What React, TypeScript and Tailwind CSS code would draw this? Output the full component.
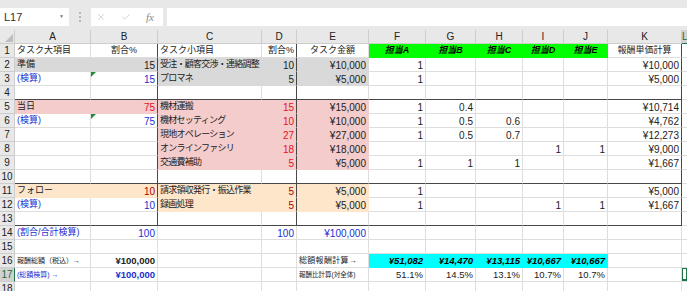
import { X, Check } from "lucide-react"

type Cell = { t?: string; a?: "l" | "c" | "r"; fg?: string; sz?: string; k?: string; bg?: string; tri?: boolean }

const COLS = ["A", "B", "C", "D", "E", "F", "G", "H", "I", "J", "K", "L"]

const GRAY = "bg-[#d9d9d9]"
const PINK = "bg-[#f4cccc]"
const PEACH = "bg-[#fde6c9]"
const GREEN = "bg-[#00ff00]"
const CYAN = "bg-[#00ffff]"

const BLUE = "text-[#1b2fd0]"
const RED = "text-[#e8101e]"
const DRED = "text-[#b00000]"
const COND = "tracking-[-0.75px]"

const head = (t: string): Cell => ({ t, a: "c", bg: GREEN, fg: "text-black", sz: "text-[9px]", k: "font-bold italic" })
const total = (t: string): Cell => ({ t, bg: CYAN, fg: "text-black", sz: "text-[9.5px]", k: "font-bold italic" })
const pct = (t: string): Cell => ({ t, sz: "text-[9.5px]" })

const data: Record<number, Record<string, Cell>> = {
  1: {
    A: { t: "タスク大項目" },
    B: { t: "割合%", a: "c" },
    C: { t: "タスク小項目" },
    D: { t: "割合%", a: "r" },
    E: { t: "タスク金額", a: "c" },
    F: head("担当A"),
    G: head("担当B"),
    H: head("担当C"),
    I: head("担当D"),
    J: head("担当E"),
    K: { t: "報酬単価計算", a: "c" },
  },
  2: {
    A: { t: "準備", bg: GRAY },
    B: { t: "15", bg: GRAY },
    C: { t: "受注・顧客交渉・連絡調整", bg: GRAY, k: COND },
    D: { t: "10", bg: GRAY },
    E: { t: "¥10,000", bg: GRAY },
    F: { t: "1" },
    K: { t: "¥10,000" },
  },
  3: {
    A: { t: "(検算)", fg: BLUE },
    B: { t: "15", fg: BLUE, tri: true },
    C: { t: "プロマネ", bg: GRAY, k: COND },
    D: { t: "5", bg: GRAY },
    E: { t: "¥5,000", bg: GRAY },
    F: { t: "1" },
    K: { t: "¥5,000" },
  },
  5: {
    A: { t: "当日", bg: PINK },
    B: { t: "75", bg: PINK, fg: RED },
    C: { t: "機材運搬", bg: PINK, k: COND },
    D: { t: "15", bg: PINK, fg: RED },
    E: { t: "¥15,000", bg: PINK },
    F: { t: "1" },
    G: { t: "0.4" },
    K: { t: "¥10,714" },
  },
  6: {
    A: { t: "(検算)", fg: BLUE },
    B: { t: "75", fg: BLUE, tri: true },
    C: { t: "機材セッティング", bg: PINK, k: COND },
    D: { t: "10", bg: PINK, fg: RED },
    E: { t: "¥10,000", bg: PINK },
    F: { t: "1" },
    G: { t: "0.5" },
    H: { t: "0.6" },
    K: { t: "¥4,762" },
  },
  7: {
    C: { t: "現地オペレーション", bg: PINK, k: COND },
    D: { t: "27", bg: PINK, fg: RED },
    E: { t: "¥27,000", bg: PINK },
    F: { t: "1" },
    G: { t: "0.5" },
    H: { t: "0.7" },
    K: { t: "¥12,273" },
  },
  8: {
    C: { t: "オンラインファシリ", bg: PINK, k: COND },
    D: { t: "18", bg: PINK, fg: RED },
    E: { t: "¥18,000", bg: PINK },
    I: { t: "1" },
    J: { t: "1" },
    K: { t: "¥9,000" },
  },
  9: {
    C: { t: "交通費補助", bg: PINK, k: COND },
    D: { t: "5", bg: PINK, fg: RED },
    E: { t: "¥5,000", bg: PINK },
    F: { t: "1" },
    G: { t: "1" },
    H: { t: "1" },
    K: { t: "¥1,667" },
  },
  11: {
    A: { t: "フォロー", bg: PEACH },
    B: { t: "10", bg: PEACH, fg: DRED },
    C: { t: "請求領収発行・振込作業", bg: PEACH, k: COND },
    D: { t: "5", bg: PEACH, fg: DRED },
    E: { t: "¥5,000", bg: PEACH },
    F: { t: "1" },
    K: { t: "¥5,000" },
  },
  12: {
    A: { t: "(検算)", fg: BLUE },
    B: { t: "10", fg: BLUE },
    C: { t: "録画処理", bg: PEACH, k: COND },
    D: { t: "5", bg: PEACH, fg: DRED },
    E: { t: "¥5,000", bg: PEACH },
    F: { t: "1" },
    I: { t: "1" },
    J: { t: "1" },
    K: { t: "¥1,667" },
  },
  14: {
    A: { t: "(割合/合計検算)", fg: BLUE },
    B: { t: "100", fg: BLUE },
    D: { t: "100", fg: BLUE },
    E: { t: "¥100,000", fg: BLUE },
  },
  16: {
    A: { t: "報酬総額（税込）→", sz: "text-[7px]" },
    B: { t: "¥100,000", sz: "text-[9.5px]", k: "font-bold" },
    E: { t: "総額報酬計算→", sz: "text-[8px]", k: "tracking-[0.3px]" },
    F: total("¥51,082"),
    G: total("¥14,470"),
    H: total("¥13,115"),
    I: total("¥10,667"),
    J: total("¥10,667"),
  },
  17: {
    A: { t: "(総額検算) →", sz: "text-[7px]", fg: BLUE },
    B: { t: "¥100,000", sz: "text-[9.5px]", fg: BLUE, k: "font-bold" },
    E: { t: "報酬比計算(対全体)", sz: "text-[6.5px]" },
    F: pct("51.1%"),
    G: pct("14.5%"),
    H: pct("13.1%"),
    I: pct("10.7%"),
    J: pct("10.7%"),
  },
}

const isNum = (s: string) => /^[¥\d.,%]+$/.test(s)

function SheetCell({ r, col, ci }: { r: number; col: string; ci: number }) {
  const cell: Cell = data[r]?.[col] ?? {}
  const t = cell.t ?? ""
  const inBox = r >= 1 && r <= 13 && ci <= 10
  const thickR = inBox && (col === "B" || col === "D" || col === "K")
  const thickB = (r === 4 || r === 10 || r === 13) && ci <= 10
  const filled = !!cell.bg
  const selected = col === "L" && r === 17

  const rc = thickR ? "border-r-[#474747]" : filled ? "border-r-transparent" : "border-r-[#dedede]"
  const bc = thickB ? "border-b-[#474747]" : filled ? "border-b-transparent" : "border-b-[#dedede]"
  const align =
    cell.a === "c"
      ? "justify-center"
      : cell.a === "r" || (cell.a === undefined && isNum(t))
        ? "justify-end"
        : "justify-start"
  const size = cell.sz ?? (isNum(t) ? "text-[10px]" : "text-[9px]")
  const fg = cell.fg ?? "text-[#222]"

  return (
    <div
      className={`relative flex items-center overflow-hidden whitespace-nowrap px-[2px] pt-[1px] border-r border-b ${fg} ${size} ${rc} ${bc} ${align} ${cell.bg ?? ""} ${cell.k ?? ""}`}
    >
      {cell.tri && (
        <svg className="absolute left-0 top-0" width="5" height="5" viewBox="0 0 5 5">
          <polygon points="0,0 5,0 0,5" fill="#1e8c3a" />
        </svg>
      )}
      {selected && <span className="absolute inset-0 -left-[1px] -top-[1px] border-2 border-[#217346]" />}
      {t}
    </div>
  )
}

export default function App() {
  const rows = Array.from({ length: 18 }, (_, i) => i + 1)

  return (
    <div className="w-[687px] h-[291px] overflow-hidden bg-white font-['Liberation_Sans','Noto_Sans_CJK_JP',sans-serif]">
      {/* formula bar */}
      <div className="h-[30px] bg-[#e8e8e8] pt-[8px] flex items-start">
        <div className="w-[69px] h-[18px] bg-white flex items-center justify-between pl-[4px] pr-[5px]">
          <span className="text-[11px] text-[#333]">L17</span>
          <span className="text-[5px] text-[#777]">▼</span>
        </div>
        <div className="w-[22px] h-[18px] flex flex-col items-center justify-center gap-[2px]">
          <span className="w-[2px] h-[2px] rounded-full bg-[#a8a8a8]" />
          <span className="w-[2px] h-[2px] rounded-full bg-[#a8a8a8]" />
          <span className="w-[2px] h-[2px] rounded-full bg-[#a8a8a8]" />
        </div>
        <div className="w-[72px] h-[18px] bg-white flex items-center justify-between px-[5px] text-[#b0b0b0]">
          <X size={10} strokeWidth={1.3} />
          <Check size={10} strokeWidth={1.3} />
          <span className="font-['Liberation_Serif',serif] italic text-[11px] text-[#8a8a8a] pr-[4px]">fx</span>
        </div>
        <div className="ml-[4px] flex-1 h-[18px] bg-white" />
      </div>

      {/* sheet */}
      <div className="grid grid-cols-[15px_76px_67px_104px_35px_72px_57px_50px_47px_41px_44px_74px_1fr] auto-rows-[14px]">
        <div className="relative bg-[#e8e8e8] border-r border-b border-[#cdcdcd]">
          <svg className="absolute right-[1px] bottom-[1px]" width="8" height="8" viewBox="0 0 8 8">
            <polygon points="8,0 8,8 0,8" fill="#bdbdbd" />
          </svg>
        </div>
        {COLS.map((c) => (
          <div
            key={c}
            className={`flex items-center justify-center border-r border-b text-[10px] ${
              c === "L"
                ? "bg-[#d2d2d2] border-r-[#cdcdcd] border-b-[#217346] text-[#1e6b3c]"
                : "bg-[#e8e8e8] border-r-[#cdcdcd] border-b-[#cdcdcd] text-[#222]"
            }`}
          >
            {c}
          </div>
        ))}

        {rows.map((r) => [
          <div
            key={`n${r}`}
            className={`flex items-center justify-center border-r border-b text-[10px] ${
              r === 17
                ? "bg-[#d2d2d2] border-r-[#217346] border-b-[#cdcdcd] text-[#1e6b3c]"
                : "bg-[#e8e8e8] border-r-[#cdcdcd] border-b-[#cdcdcd] text-[#222]"
            }`}
          >
            {r}
          </div>,
          ...COLS.map((c, ci) => <SheetCell key={`${r}${c}`} r={r} col={c} ci={ci} />),
        ])}
      </div>
    </div>
  )
}
